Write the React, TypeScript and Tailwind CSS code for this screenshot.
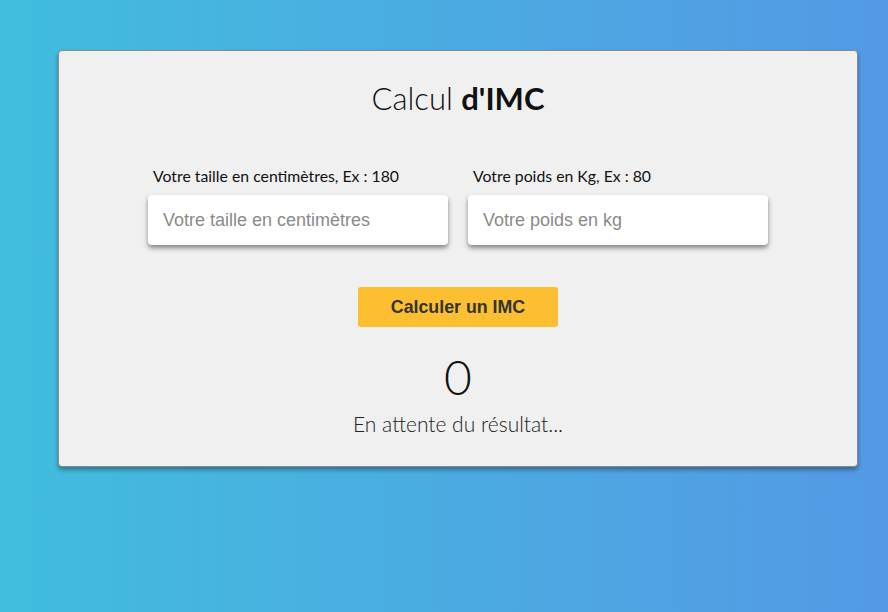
import React from 'react';

export default function App() {
  return (
    <div className="flex h-[612px] w-[888px] items-start overflow-hidden bg-gradient-to-r from-[#40bddd] to-[#5399e5] pl-[58px] pt-[50px]">
      <div className="flex h-[417px] w-[800px] flex-col items-center rounded-[4px] border border-[#8a8a8a] bg-[#f0f0f0] shadow-[0_3px_4px_rgba(0,0,0,0.35)]">
        <h1 className="mt-[28px] font-['Lato',sans-serif] text-[31px] font-light leading-[38px] text-[#111]">
          Calcul <span className="font-bold">d'IMC</span>
        </h1>

        <div className="mt-[49px] flex gap-[20px]">
          <div className="flex w-[300px] flex-col">
            <label className="ml-[5px] font-['Lato',sans-serif] text-[15.8px] leading-[20px] text-[#111]">
              Votre taille en centimètres, Ex : 180
            </label>
            <input
              className="mt-[9px] h-[50px] rounded-[4px] bg-white px-[15px] font-['Liberation_Sans',Arial,sans-serif] text-[18px] text-[#333] shadow-[0_3px_5px_rgba(0,0,0,0.45)] outline-none placeholder:text-[#8a8a8a]"
              placeholder="Votre taille en centimètres"
            />
          </div>
          <div className="flex w-[300px] flex-col">
            <label className="ml-[5px] font-['Lato',sans-serif] text-[15.8px] leading-[20px] text-[#111]">
              Votre poids en Kg, Ex : 80
            </label>
            <input
              className="mt-[9px] h-[50px] rounded-[4px] bg-white px-[15px] font-['Liberation_Sans',Arial,sans-serif] text-[18px] text-[#333] shadow-[0_3px_5px_rgba(0,0,0,0.45)] outline-none placeholder:text-[#8a8a8a]"
              placeholder="Votre poids en kg"
            />
          </div>
        </div>

        <button className="mt-[42px] h-[40px] w-[200px] rounded-[3px] bg-[#fbbf31] font-['Liberation_Sans',Arial,sans-serif] text-[17.8px] font-bold text-[#333]">
          Calculer un IMC
        </button>

        <div className="mt-[25px] font-['Lato',sans-serif] text-[48px] font-light leading-[50px] text-[#111]">0</div>
        <p className="mt-[9px] font-['Lato',sans-serif] text-[21px] font-light leading-[26px] text-[#222]">
          En attente du résultat...
        </p>
      </div>
    </div>
  );
}
